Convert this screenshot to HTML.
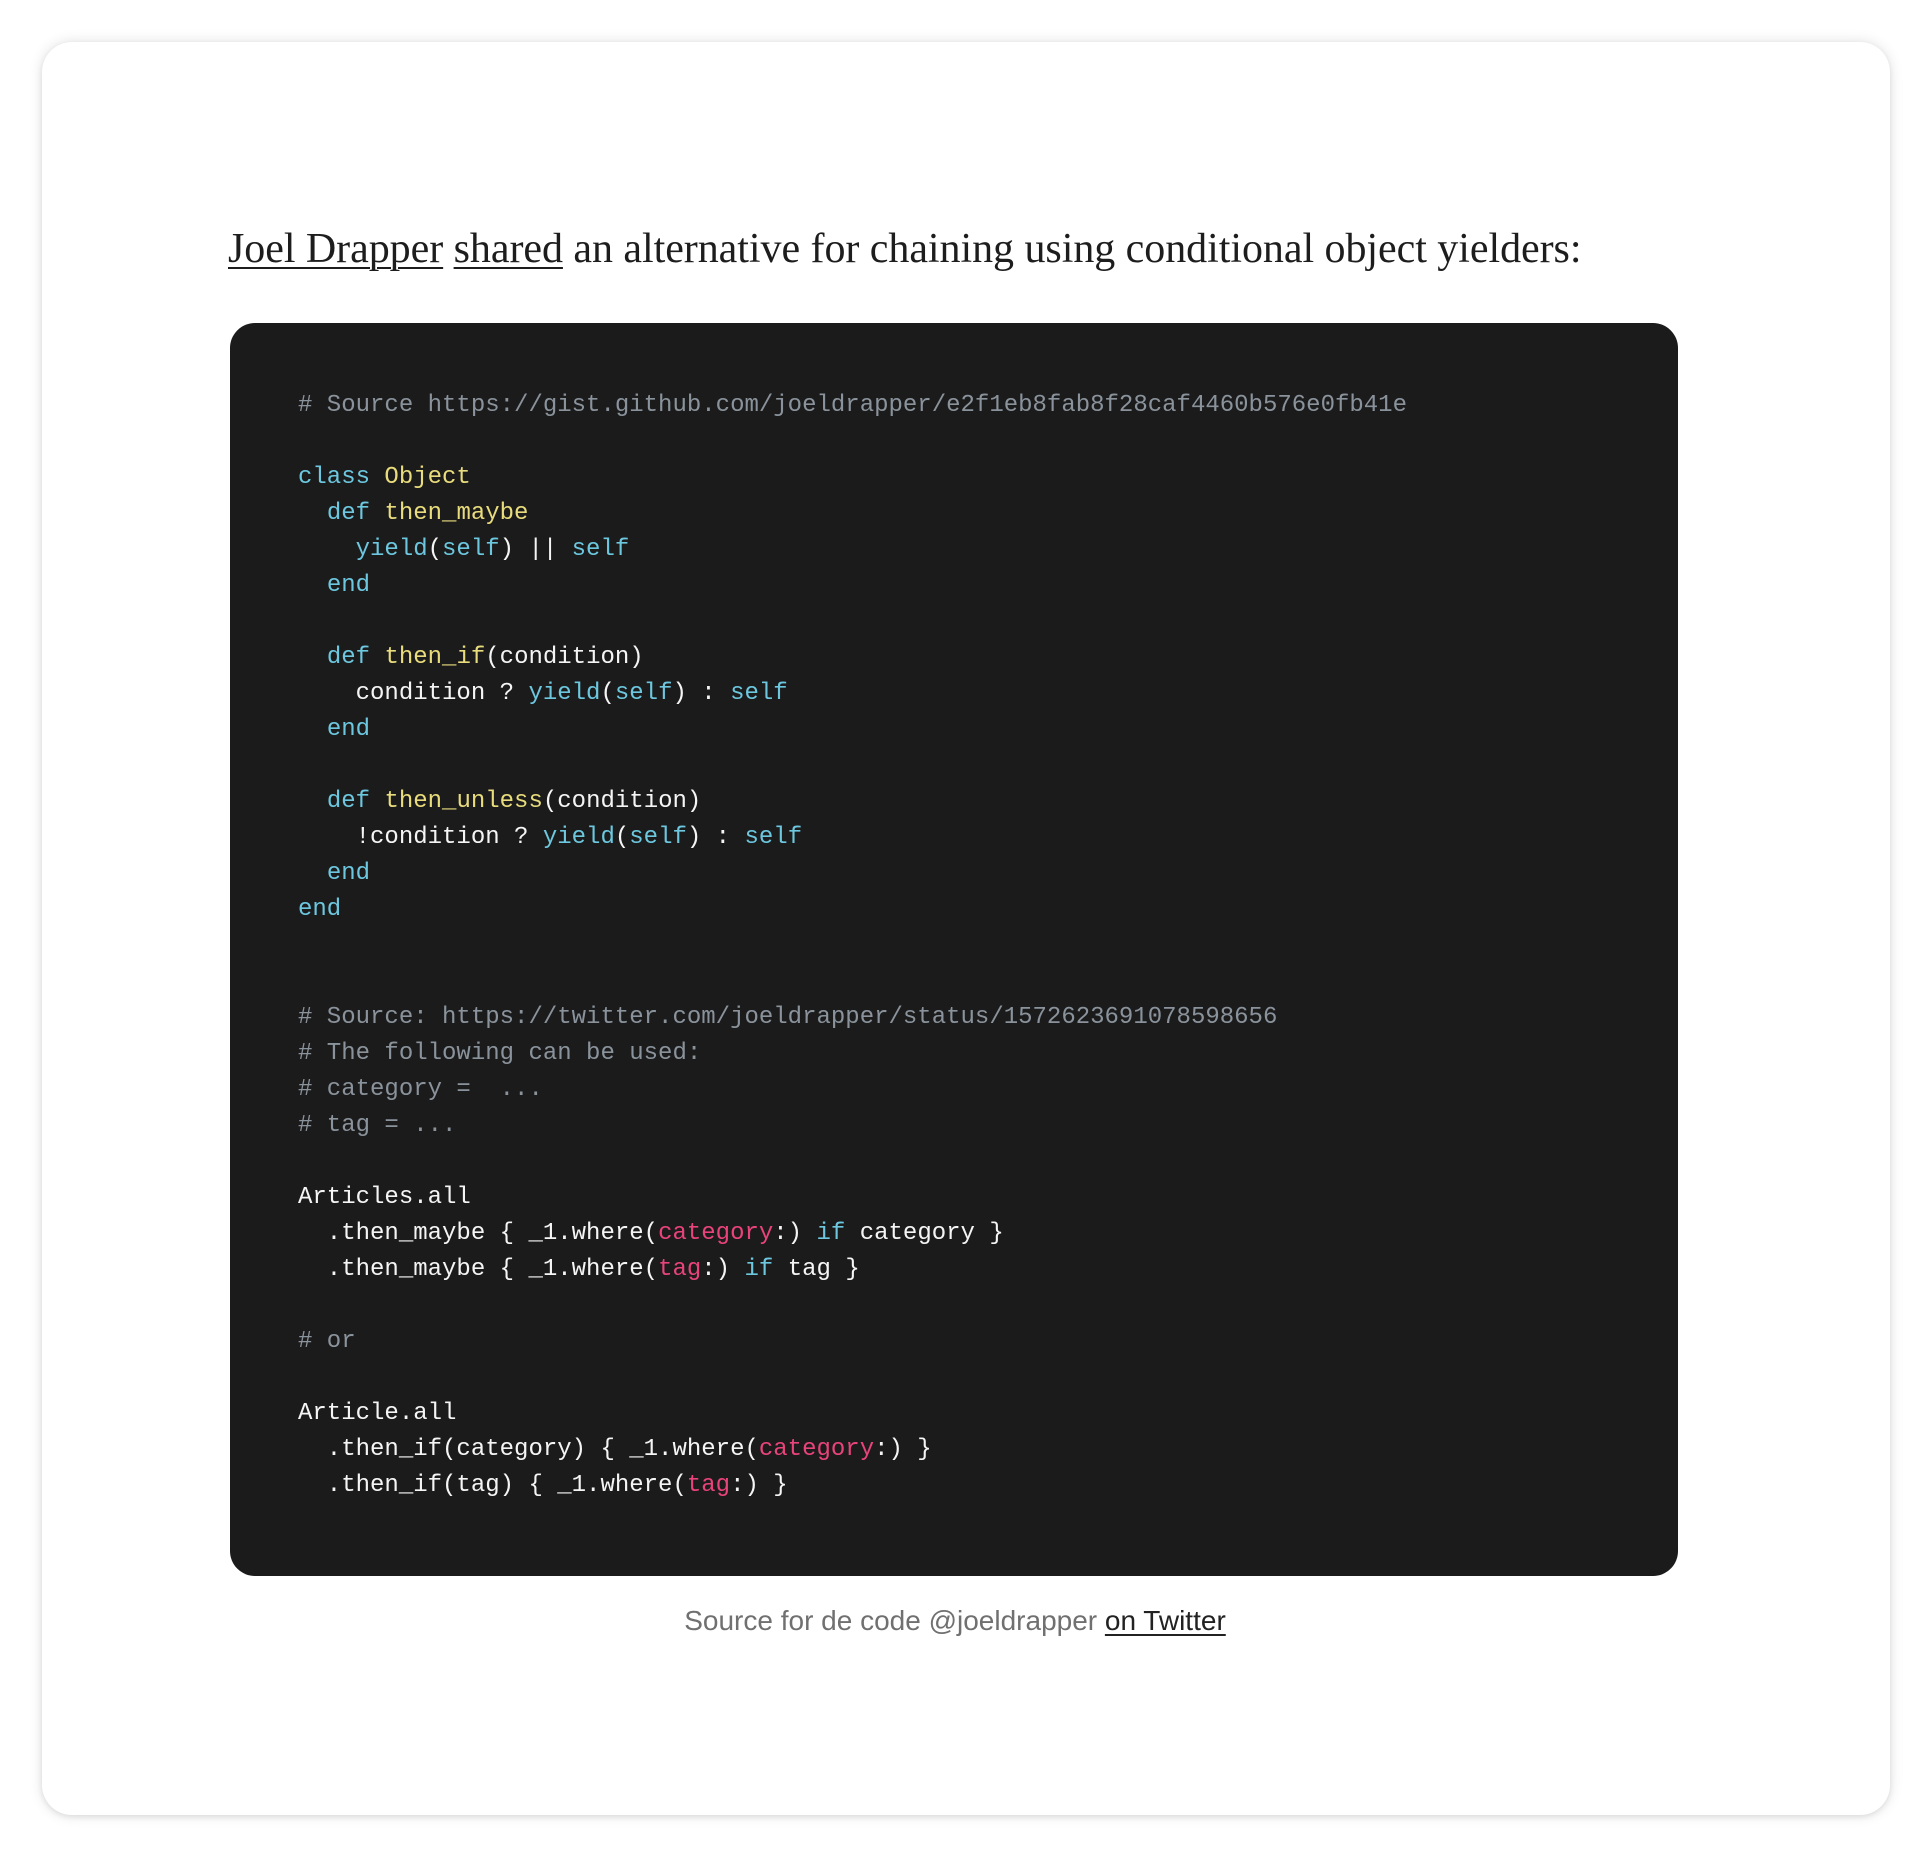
<!DOCTYPE html>
<html><head><meta charset="utf-8"><style>
html,body{margin:0;padding:0;background:#fff;width:1932px;height:1858px;overflow:hidden}
.card{position:absolute;left:42px;top:42px;width:1848px;height:1773px;background:#fff;border-radius:30px;box-shadow:0 0 14px rgba(0,0,0,.12),0 2px 6px rgba(0,0,0,.08)}
h1{position:absolute;left:228px;top:223px;margin:0;font:400 42px/52px "Liberation Serif",serif;color:#1d1d1d;white-space:nowrap;letter-spacing:-0.05px}
h1 a{color:#1d1d1d;text-decoration:underline;text-decoration-thickness:2px;text-underline-offset:5px}
.code{position:absolute;left:230px;top:323px;width:1448px;height:1253px;background:#1b1b1b;border-radius:25px}
pre{position:absolute;left:298px;top:388px;margin:0;font:400 24px/36px "Liberation Mono",monospace;color:#f5f5f5}
.c{color:#8a939c}.k{color:#6cc7df}.y{color:#e8dc7c}.p{color:#e8437a}
.cap{position:absolute;left:0;width:1910px;text-align:center;top:1603px;font:300 28px/36px "Liberation Sans",sans-serif;color:#707070}
.cap a{color:#222;text-decoration:underline;text-underline-offset:4px}
</style></head><body>
<div class="card"></div>
<h1><a>Joel Drapper</a> <a>shared</a> an alternative for chaining using conditional object yielders:</h1>
<div class="code"></div>
<pre><span class="c"># Source https://gist.github.com/joeldrapper/e2f1eb8fab8f28caf4460b576e0fb41e</span>

<span class="k">class</span> <span class="y">Object</span>
  <span class="k">def</span> <span class="y">then_maybe</span>
    <span class="k">yield</span>(<span class="k">self</span>) || <span class="k">self</span>
  <span class="k">end</span>

  <span class="k">def</span> <span class="y">then_if</span>(condition)
    condition ? <span class="k">yield</span>(<span class="k">self</span>) : <span class="k">self</span>
  <span class="k">end</span>

  <span class="k">def</span> <span class="y">then_unless</span>(condition)
    !condition ? <span class="k">yield</span>(<span class="k">self</span>) : <span class="k">self</span>
  <span class="k">end</span>
<span class="k">end</span>


<span class="c"># Source: https://twitter.com/joeldrapper/status/1572623691078598656</span>
<span class="c"># The following can be used:</span>
<span class="c"># category =  ...</span>
<span class="c"># tag = ...</span>

Articles.all
  .then_maybe { _1.where(<span class="p">category</span>:) <span class="k">if</span> category }
  .then_maybe { _1.where(<span class="p">tag</span>:) <span class="k">if</span> tag }

<span class="c"># or</span>

Article.all
  .then_if(category) { _1.where(<span class="p">category</span>:) }
  .then_if(tag) { _1.where(<span class="p">tag</span>:) }</pre>
<div class="cap">Source for de code @joeldrapper <a>on Twitter</a></div>
</body></html>
